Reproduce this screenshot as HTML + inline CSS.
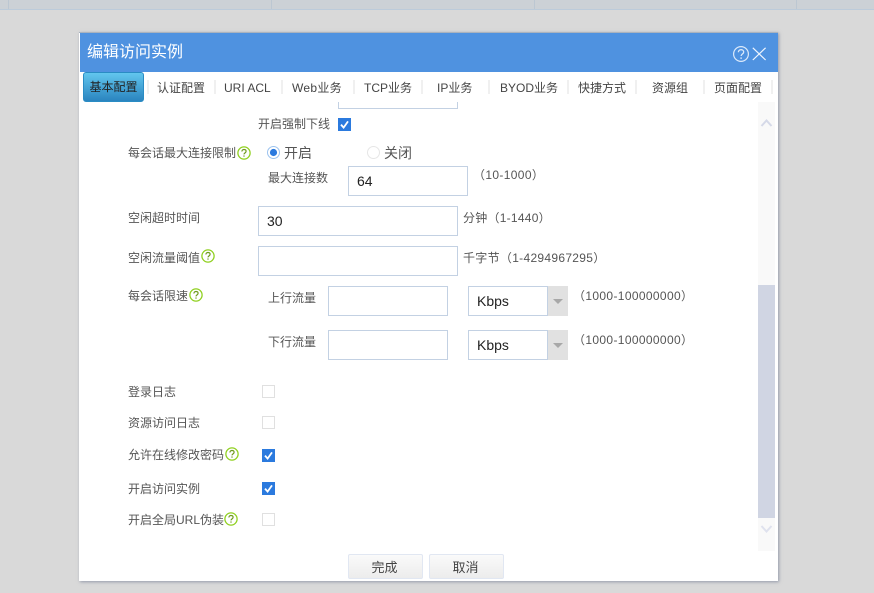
<!DOCTYPE html>
<html><head><meta charset="utf-8">
<style>
html,body{margin:0;padding:0}
body{width:874px;height:593px;overflow:hidden;background:#d9d9d9;position:relative;font-family:"Liberation Sans","Noto Sans CJK SC",sans-serif;font-size:12px;color:#555}
div,span{position:absolute;box-sizing:border-box;white-space:nowrap}
.top{left:0;top:0;width:874px;height:10px;background:#ccd1d6;border-bottom:1px solid #bccbda}
.vl{top:0;width:1px;height:9px;background:#bcc7d2}
.dlg{left:79px;top:32px;width:699px;height:549px;background:#fff;border-top:1px solid #a9b3bf;box-shadow:1px 1px 3px rgba(90,100,130,.55)}
.abs{position:absolute}
.hd{left:80px;top:33px;width:698px;height:39px;background:#4f92e0}
.ttl{left:87px;top:42px;font-size:16px;line-height:22px;color:#fff}
.tab{top:80px;line-height:16px;font-size:12px;color:#444;text-align:center}
.sep{top:80px;width:2px;height:14px;background:#f0f0f0}
.act{left:83px;top:72px;width:61px;height:30px;border:1px solid #2a8cc4;border-radius:3px;background:linear-gradient(#62c6ee,#2a84bf);color:#222;text-align:center;line-height:29px;font-size:12px}
.l{line-height:16px;color:#555}
.inp{background:#fff;border:1px solid #c3d1e3;font-size:14px;color:#222;line-height:28px;padding-left:8px;height:30px}
.cb{width:13px;height:13px;left:262px;background:#fff;border:1px solid #e0e0e0}
.on{background:#2b7ade;border:none}
.on svg{position:absolute;left:0;top:0}
.sel{left:468px;width:100px;height:30px;background:#e1e1e1}
.sel .b{left:0;top:0;width:80px;height:30px;background:#fff;border:1px solid #c3d1e3;font-size:14px;color:#222;line-height:28px;padding-left:8px}
.sel .a{left:85px;top:13px;width:0;height:0;border-left:5px solid transparent;border-right:5px solid transparent;border-top:5px solid #a8a8a8}
.q{display:block}
.btn{top:554px;width:75px;height:25px;border:1px solid #e1e7f2;border-radius:2px;background:linear-gradient(#fafafa,#ececec);text-align:center;line-height:25px;font-size:13px;color:#444;padding-right:2px}
</style></head><body>
<div class="top"></div>
<div class="vl" style="left:8px"></div><div class="vl" style="left:271px"></div><div class="vl" style="left:534px"></div><div class="vl" style="left:796px"></div>
<div class="dlg"></div>
<div class="hd"></div>
<div class="ttl">编辑访问实例</div>
<svg class="abs" style="left:732px;top:45px" width="38" height="19" viewBox="0 0 38 19" fill="none" stroke="#dbe9fa">
<circle cx="9" cy="9" r="7.4" stroke-width="1.2"/>
<path d="M6.4 7.2c0-1.6 1.2-2.5 2.7-2.5s2.6.9 2.6 2.3c0 2-2.6 2-2.6 4" stroke-width="1.3"/>
<path d="M9.1 12.4v1.5" stroke-width="1.4"/>
<path d="M20.8 2.8L33.6 15M33.6 2.8L20.8 15" stroke-width="1.2" stroke="#f0f6fe"/>
</svg>

<div class="act">基本配置</div>
<div class="sep" style="left:147px"></div>
<div class="tab" style="left:157px">认证配置</div>
<div class="sep" style="left:214px"></div>
<div class="tab" style="left:224px">URI ACL</div>
<div class="sep" style="left:281px"></div>
<div class="tab" style="left:292px;letter-spacing:.3px">Web业务</div>
<div class="sep" style="left:353px"></div>
<div class="tab" style="left:364px">TCP业务</div>
<div class="sep" style="left:421px"></div>
<div class="tab" style="left:437px">IP业务</div>
<div class="sep" style="left:488px"></div>
<div class="tab" style="left:500px">BYOD业务</div>
<div class="sep" style="left:567px"></div>
<div class="tab" style="left:578px">快捷方式</div>
<div class="sep" style="left:635px"></div>
<div class="tab" style="left:652px">资源组</div>
<div class="sep" style="left:703px"></div>
<div class="tab" style="left:714px">页面配置</div>
<div class="sep" style="left:771px"></div>

<div class="abs" style="left:338px;top:102px;width:120px;height:7px;border:1px solid #c3d1e3;border-top:none"></div>

<div class="l" style="left:258px;top:116px">开启强制下线</div>
<div class="cb on" style="left:338px;top:118px"><svg width="13" height="13"><path d="M3 6.6l2.6 3L10 3.4" fill="none" stroke="#fff" stroke-width="1.8"/></svg></div>

<div class="l" style="left:128px;top:145px">每会话最大连接限制</div>
<svg class="abs q" style="left:237px;top:146px" width="14" height="14" viewBox="0 0 14 14" fill="none" stroke="#90d020"><circle cx="7" cy="7" r="6.1" stroke-width="1.3"/><path d="M4.9 5.5c0-1.3.9-2 2.1-2s2.1.7 2.1 1.8c0 1.5-2.1 1.6-2.1 3.1" stroke-width="1.2" stroke="#6f9a20"/><path d="M7 9.4v1.3" stroke-width="1.2" stroke="#6f9a20"/></svg>
<svg class="abs" style="left:266px;top:145px" width="15" height="15"><circle cx="7.5" cy="7.5" r="6" fill="#fff" stroke="#9cc3ef"/><circle cx="7.5" cy="7.5" r="3.6" fill="#2b7ade"/></svg>
<div class="l" style="left:284px;top:145px;font-size:14px">开启</div>
<svg class="abs" style="left:366px;top:145px" width="15" height="15"><circle cx="7.5" cy="7.5" r="6" fill="#fff" stroke="#e6e6e6"/></svg>
<div class="l" style="left:384px;top:145px;font-size:14px">关闭</div>
<div class="l" style="left:268px;top:170px">最大连接数</div>
<div class="inp" style="left:348px;top:166px;width:120px">64</div>
<div class="l" style="left:473px;top:167px;letter-spacing:.35px">（10-1000）</div>

<div class="l" style="left:128px;top:210px">空闲超时时间</div>
<div class="inp" style="left:258px;top:206px;width:200px">30</div>
<div class="l" style="left:463px;top:210px;letter-spacing:.25px">分钟（1-1440）</div>

<div class="l" style="left:128px;top:250px">空闲流量阈值</div>
<svg class="abs q" style="left:201px;top:249px" width="14" height="14" viewBox="0 0 14 14" fill="none" stroke="#90d020"><circle cx="7" cy="7" r="6.1" stroke-width="1.3"/><path d="M4.9 5.5c0-1.3.9-2 2.1-2s2.1.7 2.1 1.8c0 1.5-2.1 1.6-2.1 3.1" stroke-width="1.2" stroke="#6f9a20"/><path d="M7 9.4v1.3" stroke-width="1.2" stroke="#6f9a20"/></svg>
<div class="inp" style="left:258px;top:246px;width:200px"></div>
<div class="l" style="left:463px;top:250px;letter-spacing:.3px">千字节（1-4294967295）</div>

<div class="l" style="left:128px;top:288px">每会话限速</div>
<svg class="abs q" style="left:189px;top:288px" width="14" height="14" viewBox="0 0 14 14" fill="none" stroke="#90d020"><circle cx="7" cy="7" r="6.1" stroke-width="1.3"/><path d="M4.9 5.5c0-1.3.9-2 2.1-2s2.1.7 2.1 1.8c0 1.5-2.1 1.6-2.1 3.1" stroke-width="1.2" stroke="#6f9a20"/><path d="M7 9.4v1.3" stroke-width="1.2" stroke="#6f9a20"/></svg>

<div class="l" style="left:268px;top:290px">上行流量</div>
<div class="inp" style="left:328px;top:286px;width:120px"></div>
<div class="sel" style="top:286px"><div class="b">Kbps</div><div class="a"></div></div>
<div class="l" style="left:573px;top:288px;letter-spacing:.35px">（1000-100000000）</div>

<div class="l" style="left:268px;top:334px">下行流量</div>
<div class="inp" style="left:328px;top:330px;width:120px"></div>
<div class="sel" style="top:330px"><div class="b">Kbps</div><div class="a"></div></div>
<div class="l" style="left:573px;top:332px;letter-spacing:.35px">（1000-100000000）</div>

<div class="l" style="left:128px;top:384px">登录日志</div>
<div class="cb" style="top:385px"></div>
<div class="l" style="left:128px;top:415px">资源访问日志</div>
<div class="cb" style="top:416px"></div>
<div class="l" style="left:128px;top:447px">允许在线修改密码</div>
<svg class="abs q" style="left:225px;top:447px" width="14" height="14" viewBox="0 0 14 14" fill="none" stroke="#90d020"><circle cx="7" cy="7" r="6.1" stroke-width="1.3"/><path d="M4.9 5.5c0-1.3.9-2 2.1-2s2.1.7 2.1 1.8c0 1.5-2.1 1.6-2.1 3.1" stroke-width="1.2" stroke="#6f9a20"/><path d="M7 9.4v1.3" stroke-width="1.2" stroke="#6f9a20"/></svg>
<div class="cb on" style="top:449px"><svg width="13" height="13"><path d="M3 6.6l2.6 3L10 3.4" fill="none" stroke="#fff" stroke-width="1.8"/></svg></div>
<div class="l" style="left:128px;top:481px">开启访问实例</div>
<div class="cb on" style="top:482px"><svg width="13" height="13"><path d="M3 6.6l2.6 3L10 3.4" fill="none" stroke="#fff" stroke-width="1.8"/></svg></div>
<div class="l" style="left:128px;top:512px">开启全局URL伪装</div>
<svg class="abs q" style="left:224px;top:512px" width="14" height="14" viewBox="0 0 14 14" fill="none" stroke="#90d020"><circle cx="7" cy="7" r="6.1" stroke-width="1.3"/><path d="M4.9 5.5c0-1.3.9-2 2.1-2s2.1.7 2.1 1.8c0 1.5-2.1 1.6-2.1 3.1" stroke-width="1.2" stroke="#6f9a20"/><path d="M7 9.4v1.3" stroke-width="1.2" stroke="#6f9a20"/></svg>
<div class="cb" style="top:513px"></div>

<div class="abs" style="left:758px;top:102px;width:17px;height:449px;background:#f9f9f9"></div>
<div class="abs" style="left:758px;top:285px;width:17px;height:233px;background:#d0d5e3"></div>
<svg class="abs" style="left:760px;top:118px" width="13" height="10"><path d="M1.5 8L6.5 2.5 11.5 8" fill="none" stroke="#d5d9e8" stroke-width="2"/></svg>
<svg class="abs" style="left:760px;top:524px" width="13" height="10"><path d="M1.5 2L6.5 7.5 11.5 2" fill="none" stroke="#dfe2ee" stroke-width="2"/></svg>

<div class="btn" style="left:348px">完成</div>
<div class="btn" style="left:429px">取消</div>
</body></html>
